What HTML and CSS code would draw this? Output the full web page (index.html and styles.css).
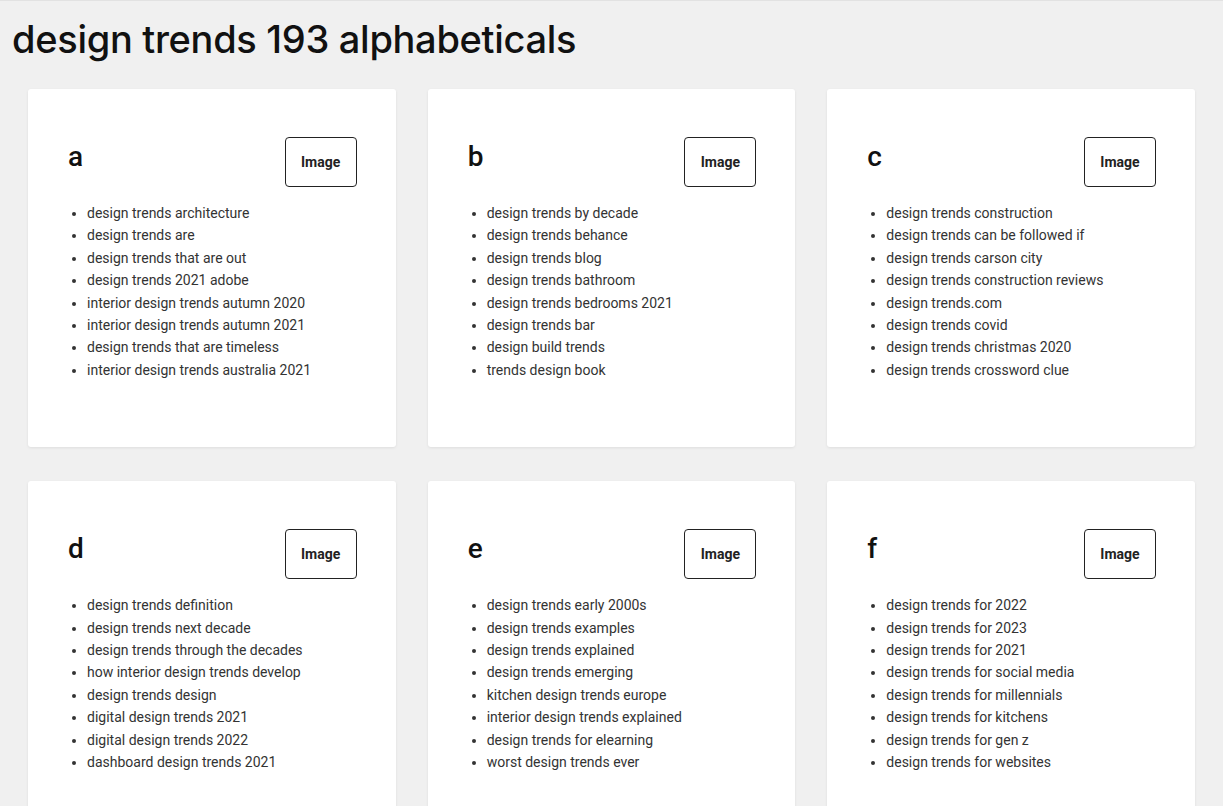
FILE: index.html
```html
<!DOCTYPE html>
<html>
<head>
<meta charset="utf-8">
<link rel="stylesheet" href="styles.css">
</head>
<body>
<h1 class="title">design trends 193 alphabeticals</h1>
<div class="grid">
  <div class="card">
    <div class="card-head"><h2 class="letter">a</h2><div class="img">Image</div></div>
    <ul class="list">
      <li>design trends architecture</li>
      <li>design trends are</li>
      <li>design trends that are out</li>
      <li>design trends 2021 adobe</li>
      <li>interior design trends autumn 2020</li>
      <li>interior design trends autumn 2021</li>
      <li>design trends that are timeless</li>
      <li>interior design trends australia 2021</li>
    </ul>
  </div>
  <div class="card">
    <div class="card-head"><h2 class="letter">b</h2><div class="img">Image</div></div>
    <ul class="list">
      <li>design trends by decade</li>
      <li>design trends behance</li>
      <li>design trends blog</li>
      <li>design trends bathroom</li>
      <li>design trends bedrooms 2021</li>
      <li>design trends bar</li>
      <li>design build trends</li>
      <li>trends design book</li>
    </ul>
  </div>
  <div class="card">
    <div class="card-head"><h2 class="letter">c</h2><div class="img">Image</div></div>
    <ul class="list">
      <li>design trends construction</li>
      <li>design trends can be followed if</li>
      <li>design trends carson city</li>
      <li>design trends construction reviews</li>
      <li>design trends.com</li>
      <li>design trends covid</li>
      <li>design trends christmas 2020</li>
      <li>design trends crossword clue</li>
    </ul>
  </div>
  <div class="card">
    <div class="card-head"><h2 class="letter">d</h2><div class="img">Image</div></div>
    <ul class="list">
      <li>design trends definition</li>
      <li>design trends next decade</li>
      <li>design trends through the decades</li>
      <li>how interior design trends develop</li>
      <li>design trends design</li>
      <li>digital design trends 2021</li>
      <li>digital design trends 2022</li>
      <li>dashboard design trends 2021</li>
    </ul>
  </div>
  <div class="card">
    <div class="card-head"><h2 class="letter">e</h2><div class="img">Image</div></div>
    <ul class="list">
      <li>design trends early 2000s</li>
      <li>design trends examples</li>
      <li>design trends explained</li>
      <li>design trends emerging</li>
      <li>kitchen design trends europe</li>
      <li>interior design trends explained</li>
      <li>design trends for elearning</li>
      <li>worst design trends ever</li>
    </ul>
  </div>
  <div class="card">
    <div class="card-head"><h2 class="letter">f</h2><div class="img">Image</div></div>
    <ul class="list">
      <li>design trends for 2022</li>
      <li>design trends for 2023</li>
      <li>design trends for 2021</li>
      <li>design trends for social media</li>
      <li>design trends for millennials</li>
      <li>design trends for kitchens</li>
      <li>design trends for gen z</li>
      <li>design trends for websites</li>
    </ul>
  </div>
</div>
</body>
</html>
```
FILE: styles.css
```css
html, body {
  margin: 0;
  padding: 0;
}
body {
  background: #f0f0f0;
  font-family: Roboto, "Liberation Sans", sans-serif;
  color: #222;
  border-top: 1px solid #e2e2e2;
}
.title {
  margin: 0;
  padding: 14px 12px 0;
  font-family: Inter, "Liberation Sans", sans-serif;
  font-weight: 500;
  font-size: 38px;
  line-height: 48px;
  letter-spacing: -0.3px;
  color: #111;
}
.grid {
  display: grid;
  grid-template-columns: repeat(3, 1fr);
  column-gap: 32px;
  row-gap: 34px;
  padding: 26px 28px 40px;
}
.card {
  background: #fff;
  border-radius: 3px;
  box-shadow: 0 1px 3px rgba(0,0,0,0.08);
  padding: 48px 39px 50px 40px;
}
.card-head {
  display: flex;
  justify-content: space-between;
  align-items: flex-start;
}
.letter {
  margin: 0;
  padding-top: 4px;
  font-family: Roboto, "Liberation Sans", sans-serif;
  font-weight: 500;
  font-size: 28px;
  line-height: 32px;
  color: #111;
}
.img {
  width: 70px;
  height: 48px;
  border: 1px solid #222;
  border-radius: 4px;
  display: flex;
  align-items: center;
  justify-content: center;
  font-family: Roboto, "Liberation Sans", sans-serif;
  font-weight: 700;
  font-size: 14px;
  color: #222;
}
.list {
  margin: 15px 0 16px;
  padding-left: 19px;
  font-size: 14px;
  line-height: 22.4px;
  color: #333;
}
```
